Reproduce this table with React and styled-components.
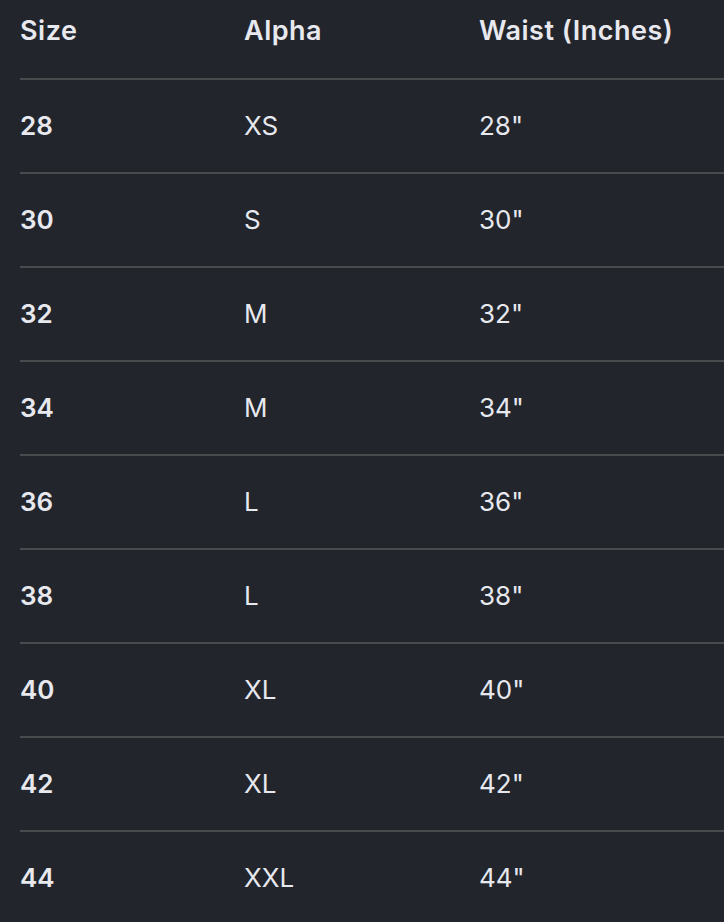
import React from "react";
import styled, { createGlobalStyle } from "styled-components";

const GlobalStyle = createGlobalStyle`
  html, body {
    margin: 0;
    padding: 0;
    background: #22252c;
  }
  body {
    font-family: Inter, "Noto Sans", "Liberation Sans", sans-serif;
    color: #e8e8ef;
    overflow: hidden;
  }
`;

const sizes = [
  { size: "28", alpha: "XS", waist: "28\"" },
  { size: "30", alpha: "S", waist: "30\"" },
  { size: "32", alpha: "M", waist: "32\"" },
  { size: "34", alpha: "M", waist: "34\"" },
  { size: "36", alpha: "L", waist: "36\"" },
  { size: "38", alpha: "L", waist: "38\"" },
  { size: "40", alpha: "XL", waist: "40\"" },
  { size: "42", alpha: "XL", waist: "42\"" },
  { size: "44", alpha: "XXL", waist: "44\"" },
];

const App = () => {
  return (
    <Page>
      <GlobalStyle />
      <Table>
        <HeadRow>
          <HeadCell>Size</HeadCell>
          <HeadCell>Alpha</HeadCell>
          <HeadCell>Waist (Inches)</HeadCell>
        </HeadRow>
        {sizes.map((row) => (
          <Row key={row.size}>
            <Cell bold>{row.size}</Cell>
            <Cell>{row.alpha}</Cell>
            <Cell>{row.waist}</Cell>
          </Row>
        ))}
      </Table>
    </Page>
  );
};

const Page = styled.div`
  width: 724px;
  height: 922px;
  background: #22252c;
  padding-left: 20px;
  box-sizing: border-box;
`;

const Table = styled.div`
  display: flex;
  flex-direction: column;
`;

const HeadRow = styled.div`
  display: grid;
  grid-template-columns: 224px 235px 1fr;
  height: 78px;
  padding-top: 10px;
  box-sizing: border-box;
`;

const HeadCell = styled.div`
  font-size: 27px;
  font-weight: 600;
  line-height: 42px;
  letter-spacing: 0.5px;
`;

const Row = styled.div`
  display: grid;
  grid-template-columns: 224px 235px 1fr;
  align-items: center;
  height: 94px;
  border-top: 2px solid #4a4b4d;
  box-sizing: border-box;
`;

const Cell = styled.div`
  font-size: 26px;
  font-weight: ${(p) => (p.bold ? 600 : 400)};
  line-height: 42px;
`;

export default App;
